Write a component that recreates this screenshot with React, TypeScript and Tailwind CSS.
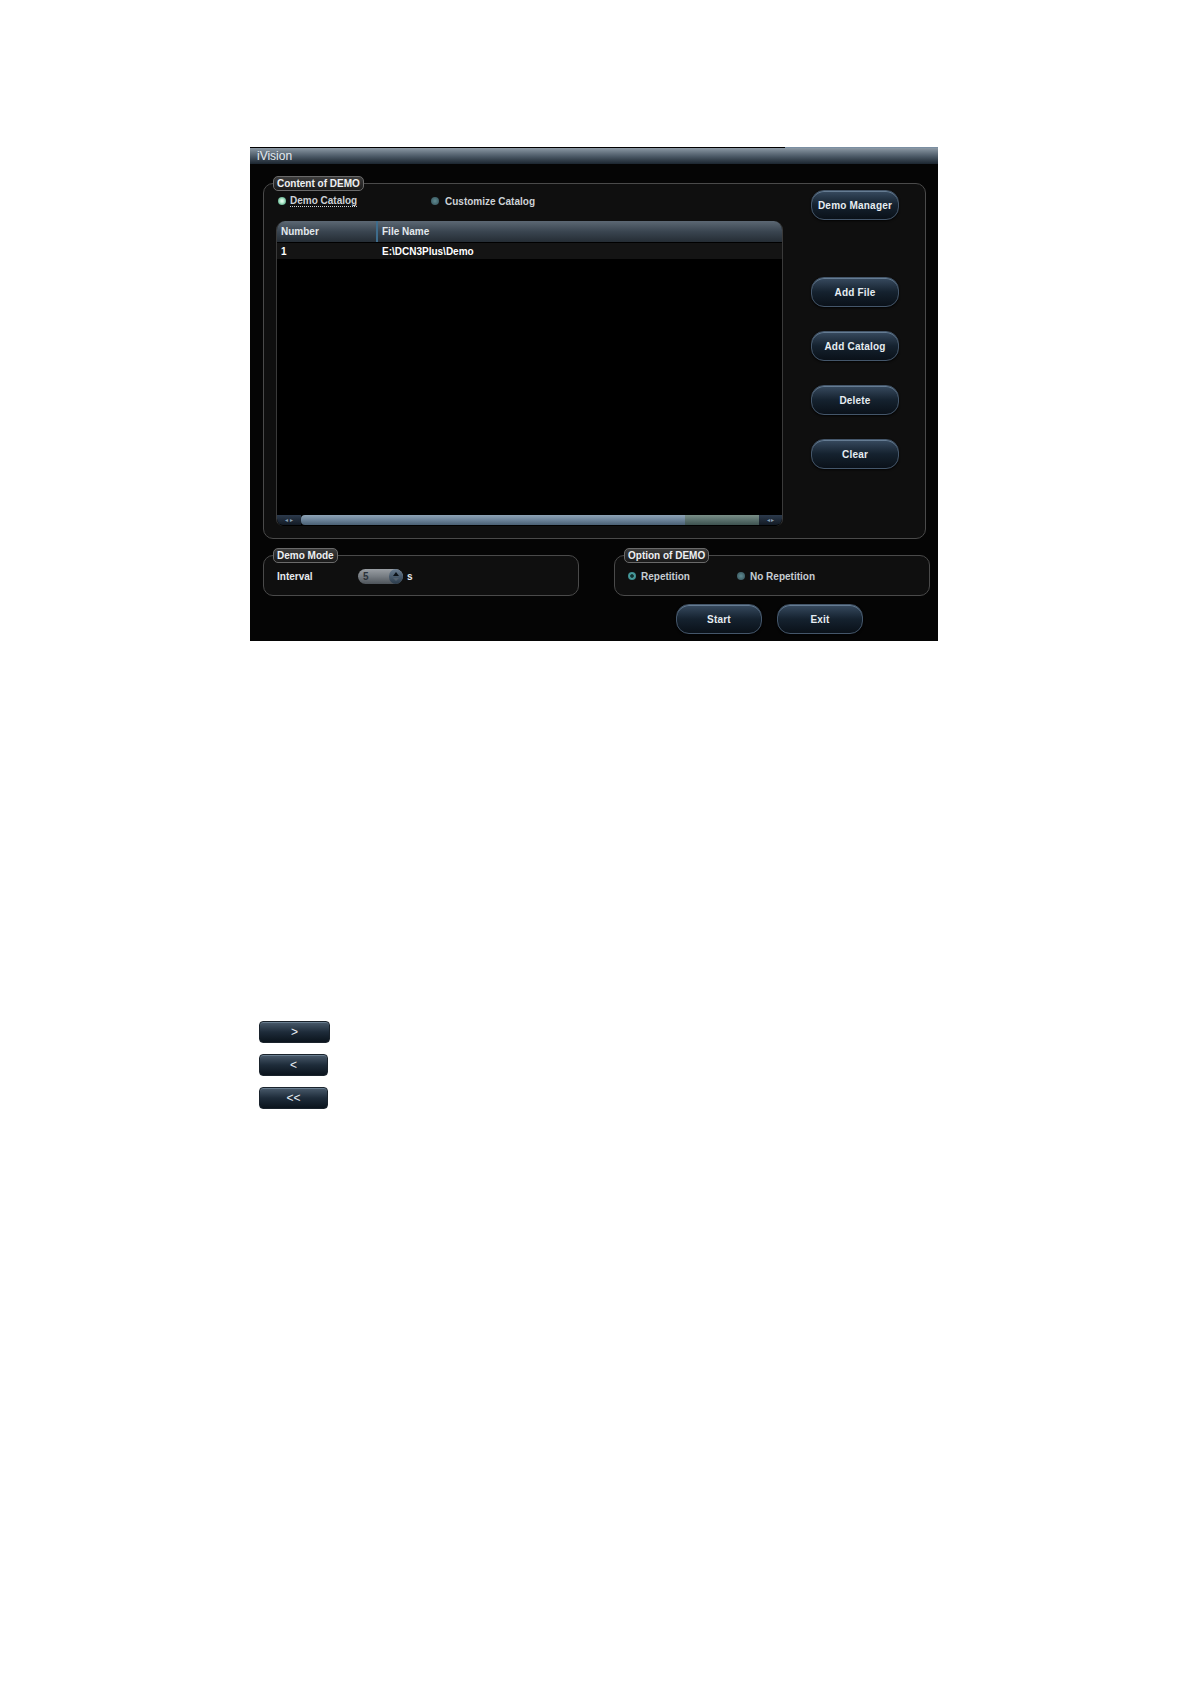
import type { ReactNode } from 'react';

const font = "font-['Liberation_Sans',Arial,sans-serif]";

function GlossButton({ label, w = 'w-[88px]' }: { label: string; w?: string }) {
  return (
    <div
      className={`${w} h-[30px] rounded-[13px] border border-[#44566a] bg-linear-to-b from-[#384b60] via-[#15222f] to-[#0a1119] shadow-[inset_0_1px_0_rgba(170,200,225,0.4),0_1px_2px_rgba(0,0,0,0.8)] flex items-center justify-center text-[10px] font-bold text-[#e6edf2] tracking-[0.2px]`}
    >
      {label}
    </div>
  );
}

function Legend({ children }: { children: ReactNode }) {
  return (
    <div className="absolute -top-[8px] left-[9px] h-[15px] px-[3px] rounded-[5px] border border-[#6a6a6a] bg-linear-to-b from-[#3c3c3c] to-[#1a1a1a] flex items-center text-[10px] font-bold text-[#eef0f2] leading-none">
      {children}
    </div>
  );
}

function Radio({ kind }: { kind: 'on' | 'off' | 'ring' }) {
  if (kind === 'on')
    return (
      <span className="w-[8px] h-[8px] rounded-full bg-[radial-gradient(circle,#f2fff8_0,#b8ecd0_35%,#5fae8c_75%,#2f6a58_100%)]" />
    );
  if (kind === 'ring')
    return (
      <span className="w-[8px] h-[8px] rounded-full bg-[radial-gradient(circle,#12302f_0,#12302f_25%,#4aa0a0_40%,#2d7076_100%)]" />
    );
  return (
    <span className="w-[8px] h-[8px] rounded-full bg-[radial-gradient(circle,#5f8a90_0,#3f6068_70%,#26383e_100%)]" />
  );
}

function Group({ className, title, children }: { className: string; title: string; children: ReactNode }) {
  return (
    <div className={`relative rounded-[10px] border border-[#4a4a4a] bg-[#0f0f0f] ${className}`}>
      <Legend>{title}</Legend>
      {children}
    </div>
  );
}

function FileTable() {
  return (
    <div className="w-[507px] h-[305px] mt-[13px] flex flex-col bg-black border-x border-[#3a3a3a] rounded-t-[9px] rounded-b-[7px] overflow-hidden">
      <div className="h-[21px] flex bg-linear-to-b from-[#5c6874] via-[#3a4550] to-[#252d35] text-[10px] font-bold text-[#e2e8ec]">
        <div className="w-[101px] pl-[4px] flex items-center border-r-2 border-[#3e6c8c]">Number</div>
        <div className="flex-1 pl-[4px] flex items-center">File Name</div>
      </div>
      <div className="h-[16px] mt-[1px] flex bg-[#141414] text-[10px] font-bold text-white">
        <div className="w-[101px] pl-[4px] flex items-center">1</div>
        <div className="flex-1 pl-[4px] flex items-center">E:\DCN3Plus\Demo</div>
      </div>
      <div className="flex-1" />
      <div className="h-[10px] mb-[1px] flex">
        <div className="w-[24px] bg-linear-to-b from-[#2c3a4c] to-[#121a24] flex items-center justify-center text-[6px] text-[#8aa0b4] leading-none rounded-bl-[6px]">
          ◂ ▸
        </div>
        <div className="flex-1 bg-linear-to-b from-[#8ea3b6] via-[#6c8399] to-[#4a6074] rounded-l-[4px]" />
        <div className="w-[74px] bg-linear-to-b from-[#7a8f88] via-[#5a706c] to-[#3e5250]" />
        <div className="w-[23px] bg-linear-to-b from-[#2c3a4c] to-[#121a24] flex items-center justify-center text-[6px] text-[#8aa0b4] leading-none rounded-br-[6px]">
          ◂ ▸
        </div>
      </div>
    </div>
  );
}

function Spinner() {
  return (
    <div className="w-[45px] h-[15px] flex rounded-full overflow-hidden bg-linear-to-b from-[#9a9fa4] via-[#767c82] to-[#4e545a]">
      <div className="flex-1 pl-[5px] flex items-center text-[10px] text-[#2a323a] font-bold">5</div>
      <div className="w-[14px] rounded-full bg-linear-to-b from-[#6a7e92] to-[#2a3a4a] flex flex-col items-center justify-center gap-[2px]">
        <svg width="6" height="4" viewBox="0 0 6 4">
          <path d="M0 4 L3 0 L6 4 Z" fill="#0c1218" />
        </svg>
        <svg width="6" height="3" viewBox="0 0 6 3">
          <path d="M0 0 L3 3 L6 0 Z" fill="#53616e" />
        </svg>
      </div>
    </div>
  );
}

function SmallButton({ label, w }: { label: string; w: string }) {
  return (
    <div
      className={`${w} h-[22px] rounded-[4px] border border-[#1a232c] bg-linear-to-b from-[#4a5b6c] via-[#1e2c3a] to-[#0b141d] shadow-[inset_0_1px_0_rgba(170,195,215,0.35)] flex items-center justify-center text-[12px] text-[#e8eef4]`}
    >
      {label}
    </div>
  );
}

export default function App() {
  return (
    <div className={`w-full min-h-[1684px] bg-white pt-[147px] pl-[250px] ${font}`}>
      <div className="w-[688px] h-[494px] bg-[#050505] flex flex-col">
        <div className="h-px flex">
          <div className="w-[535px] bg-black" />
          <div className="flex-1 bg-[#7b8fa2]" />
        </div>
        <div className="h-[16px] flex items-center pl-[7px] bg-linear-to-b from-[#8c99a5] via-[#4e5c69] to-[#1c2630] text-[12px] text-[#e4eaef] leading-none">
          iVision
        </div>

        <Group className="ml-[13px] mt-[19px] w-[663px] h-[356px] flex" title="Content of DEMO">
          <div className="pl-[12px] flex flex-col">
            <div className="h-[14px] mt-[10px] flex items-center text-[10px] font-bold text-[#cdd2d6]">
              <div className="w-[155px] pl-[2px] flex items-center gap-[4px]">
                <Radio kind="on" />
                <span className="border-b border-dotted border-[#cdd2d6] leading-[11px]">Demo Catalog</span>
              </div>
              <div className="flex items-center gap-[6px]">
                <Radio kind="off" />
                <span>Customize Catalog</span>
              </div>
            </div>
            <FileTable />
          </div>
          <div className="ml-[28px] pt-[6px] flex flex-col">
            <GlossButton label="Demo Manager" />
            <div className="mt-[57px] flex flex-col gap-[24px]">
              <GlossButton label="Add File" />
              <GlossButton label="Add Catalog" />
              <GlossButton label="Delete" />
              <GlossButton label="Clear" />
            </div>
          </div>
        </Group>

        <div className="mt-[16px] flex">
          <Group className="ml-[13px] w-[316px] h-[41px] flex items-center pl-[13px] pt-[1px]" title="Demo Mode">
            <span className="w-[81px] text-[10px] font-bold text-[#e6eaee]">Interval</span>
            <Spinner />
            <span className="ml-[4px] text-[10px] font-bold text-[#e6eaee]">s</span>
          </Group>
          <Group className="ml-[35px] w-[316px] h-[41px] flex items-center pl-[13px] pt-[1px]" title="Option of DEMO">
            <div className="w-[109px] flex items-center gap-[5px] text-[10px] font-bold text-[#c6ccd2]">
              <Radio kind="ring" />
              <span>Repetition</span>
            </div>
            <div className="flex items-center gap-[5px] text-[10px] font-bold text-[#c6ccd2]">
              <Radio kind="off" />
              <span>No Repetition</span>
            </div>
          </Group>
        </div>

        <div className="mt-[8px] pl-[426px] flex gap-[15px]">
          <GlossButton label="Start" w="w-[86px]" />
          <GlossButton label="Exit" w="w-[86px]" />
        </div>
      </div>

      <div className="ml-[9px] mt-[380px] flex flex-col gap-[11px]">
        <SmallButton label=">" w="w-[71px]" />
        <SmallButton label="<" w="w-[69px]" />
        <SmallButton label="<<" w="w-[69px]" />
      </div>
    </div>
  );
}
